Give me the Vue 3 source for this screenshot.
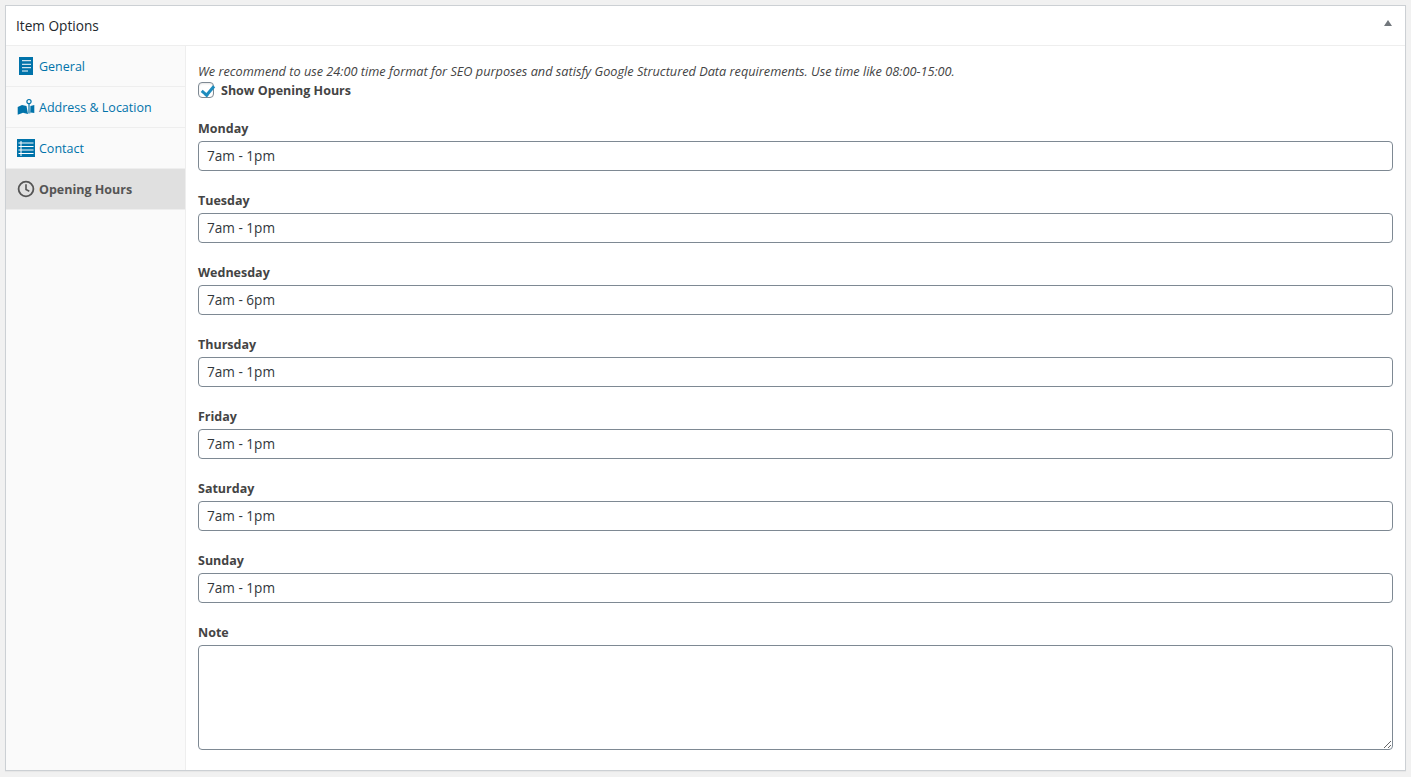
<script setup>
const tabs = [
  { name: 'General', icon: 'doc' },
  { name: 'Address & Location', icon: 'map' },
  { name: 'Contact', icon: 'list' },
  { name: 'Opening Hours', icon: 'clock', active: true },
]
const days = [
  ['Monday', '7am - 1pm'],
  ['Tuesday', '7am - 1pm'],
  ['Wednesday', '7am - 6pm'],
  ['Thursday', '7am - 1pm'],
  ['Friday', '7am - 1pm'],
  ['Saturday', '7am - 1pm'],
  ['Sunday', '7am - 1pm'],
]
</script>

<template>
  <div class="page">
    <section class="box">
      <header class="head">
        <h2>Item Options</h2>
        <span class="toggle"></span>
      </header>
      <div class="body">
        <nav class="side">
          <a v-for="t in tabs" :key="t.name" class="tab" :class="{ active: t.active }">
            <svg class="ico" viewBox="0 0 20 20" width="20" height="20" aria-hidden="true">
              <template v-if="t.icon === 'doc'">
                <rect x="3" y="1" width="14" height="18" fill="#0073aa" />
                <path d="M6 4.7h9M6 8.3h9M6 11.7h9M6 15h6" stroke="#fff" stroke-width="1" fill="none" />
              </template>
              <template v-else-if="t.icon === 'map'">
                <path d="M1.7 10 L6 8 L10.5 9 L12 17 L7 15.7 L1.7 17.7 Z M14.4 9 L18.3 8 V16 L14.6 15.6 L14.2 17 Z" fill="#0073aa" />
                <circle cx="13" cy="4.6" r="2.1" fill="none" stroke="#0073aa" stroke-width="1.2" />
                <path d="M13 6.8 V16.5" stroke="#0073aa" stroke-width="1.2" />
              </template>
              <template v-else-if="t.icon === 'list'">
                <rect x="1" y="1" width="18" height="18" fill="#0073aa" />
                <path d="M2.5 5h15M2.5 8.5h15M2.5 12h15M2.5 15.5h15M5 3v15" stroke="#fff" stroke-width="1" fill="none" />
              </template>
              <template v-else>
                <circle cx="10" cy="10" r="7.4" fill="none" stroke="#555" stroke-width="1.8" />
                <path d="M10 5.3V10.5L13.3 12.2" fill="none" stroke="#555" stroke-width="1.6" />
              </template>
            </svg>
            <span>{{ t.name }}</span>
          </a>
        </nav>
        <div class="main">
          <p class="hint">We recommend to use 24:00 time format for SEO purposes and satisfy Google Structured Data requirements. Use time like 08:00-15:00.</p>
          <label class="check">
            <input type="checkbox" checked />
            <span>Show Opening Hours</span>
          </label>
          <div v-for="d in days" :key="d[0]" class="field">
            <label>{{ d[0] }}</label>
            <input type="text" :value="d[1]" />
          </div>
          <div class="field">
            <label>Note</label>
            <textarea></textarea>
          </div>
        </div>
      </div>
    </section>
  </div>
</template>

<style>
html, body { background: #f1f1f1; }
</style>

<style scoped>
.page {
  padding: 5px;
  font-family: "Open Sans", "Noto Sans", sans-serif;
  font-size: 12.5px;
  line-height: 18px;
  color: #444;
}
.box {
  display: flex;
  flex-direction: column;
  background: #fff;
  border: 1px solid #ccd0d4;
  box-shadow: 0 1px 1px rgba(0, 0, 0, 0.04);
}
.head {
  display: flex;
  align-items: center;
  justify-content: space-between;
  height: 39px;
  padding: 0 13px 0 10px;
  border-bottom: 1px solid #eee;
}
h2 {
  margin: 0;
  font-size: 13.65px;
  font-weight: 500;
  color: #23282d;
}
.toggle {
  width: 0;
  height: 0;
  margin-bottom: 5px;
  border-left: 4.5px solid transparent;
  border-right: 4.5px solid transparent;
  border-bottom: 6px solid #72777c;
}
.body { display: flex; }
.side {
  flex: 0 0 179px;
  background: #fafafa;
  border-right: 1px solid #eee;
}
.tab {
  display: flex;
  align-items: center;
  gap: 3px;
  height: 40px;
  padding-left: 10px;
  border-bottom: 1px solid #eee;
  color: #0073aa;
}
.tab span { padding-top: 2px; }
.tab.active {
  background: #e0e0e0;
  color: #555;
  font-weight: 700;
}
.ico { flex: none; }
.main {
  flex: 1;
  min-width: 0;
  padding: 16px 12px 20px;
}
.hint {
  margin: 0;
  font-size: 12.72px;
  font-style: italic;
}
.check {
  display: flex;
  align-items: flex-start;
  gap: 7px;
  margin-top: 2px;
  margin-bottom: -1px;
  font-weight: 700;
}
.check input {
  appearance: none;
  flex: none;
  position: relative;
  width: 16px;
  height: 16px;
  margin: 0;
  border: 1px solid #7e8993;
  border-radius: 4px;
  background: #fff;
  box-shadow: inset 0 1px 2px rgba(0, 0, 0, 0.1);
}
.check input::after {
  content: "";
  position: absolute;
  left: 4.5px;
  top: -0.5px;
  width: 4.5px;
  height: 10px;
  border: solid #1e8cbe;
  border-width: 0 3px 3px 0;
  transform: rotate(40deg);
}
.field { margin-top: 21px; }
.field label {
  display: block;
  margin-bottom: 3px;
  font-weight: 700;
}
.field input,
.field textarea {
  display: block;
  box-sizing: border-box;
  width: 100%;
  margin: 0;
  border: 1px solid #7e8993;
  border-radius: 4px;
  background: #fff;
  color: #32373c;
  font: inherit;
  font-size: 13.6px;
  outline: none;
}
.field input {
  height: 30px;
  padding: 0 8px 2px;
}
.field textarea {
  height: 105px;
  padding: 2px 6px;
}
</style>
